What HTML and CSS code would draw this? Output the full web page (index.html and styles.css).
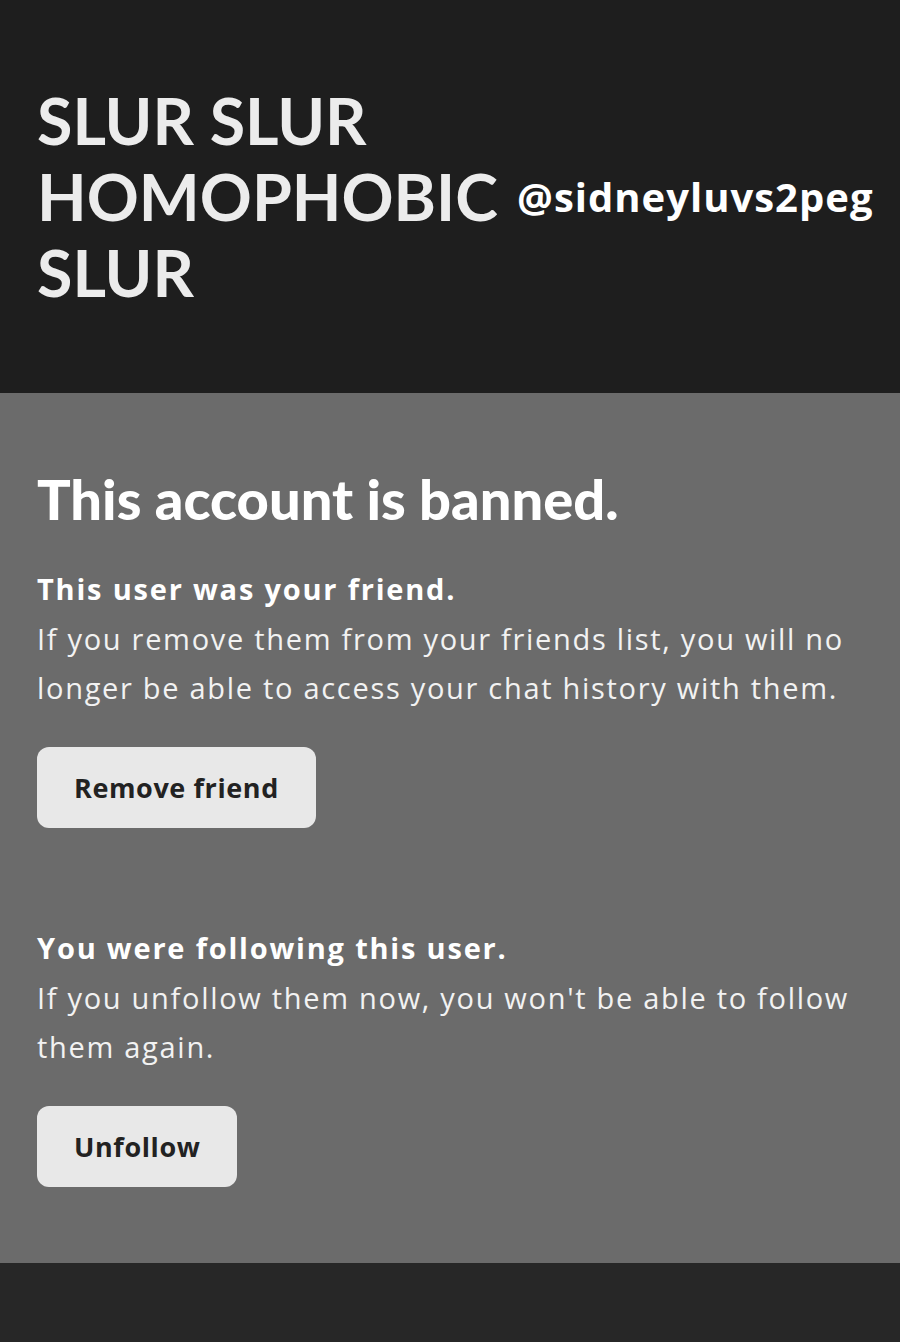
FILE: index.html
```html
<!DOCTYPE html>
<html lang="en">
<head>
  <meta charset="UTF-8" />
  <meta name="viewport" content="width=device-width, initial-scale=1.0" />
  <title>Banned account</title>
  <link rel="stylesheet" href="styles.css">
</head>
<body>

  <div class="profile-header">
    <h1 class="profile-name">SLUR SLUR HOMOPHOBIC SLUR</h1>
    <div class="profile-handle">@sidneyluvs2peg</div>
  </div>

  <div class="banned-panel">
    <h2 class="banned-title">This account is banned.</h2>

    <div class="banned-block">
      <h3 class="block-title">This user was your friend.</h3>
      <p class="block-text">If you remove them from your friends list, you will no longer be able to access your chat history with them.</p>
      <button class="block-button">Remove friend</button>
    </div>

    <div class="banned-block">
      <h3 class="block-title">You were following this user.</h3>
      <p class="block-text">If you unfollow them now, you won't be able to follow them again.</p>
      <button class="block-button">Unfollow</button>
    </div>
  </div>

  <div class="footer"></div>

</body>
</html>
```

FILE: styles.css
```css
body {
  margin: 0;
  font-family: 'Open Sans', 'Lato', sans-serif;
  background: #272727;
  color: #ffffff;
}

.profile-header {
  background: #1e1e1e;
  display: flex;
  align-items: center;
  gap: 18px;
  padding: 82px 26px 83px 37px;
}

.profile-name {
  margin: 0;
  width: 462px;
  font-family: 'Lato', sans-serif;
  font-size: 64.5px;
  line-height: 76px;
  font-weight: 700;
  color: #ececec;
}

.profile-handle {
  font-size: 40px;
  font-weight: 700;
  letter-spacing: 1px;
  color: #ffffff;
  white-space: nowrap;
}

.banned-panel {
  background: #6b6b6b;
  padding: 72px 37px 76px;
}

.banned-title {
  margin: 0 0 36px;
  font-family: 'Lato', sans-serif;
  font-size: 56px;
  line-height: 1.2;
  font-weight: 900;
}

.banned-block + .banned-block {
  margin-top: 99px;
}

.block-title {
  margin: 0 0 4px;
  font-size: 29px;
  line-height: 42px;
  font-weight: 700;
  letter-spacing: 1.8px;
}

.block-text {
  margin: 0;
  font-size: 29px;
  line-height: 49px;
  letter-spacing: 1.7px;
  color: #f2f2f2;
}

.block-button {
  margin-top: 35px;
  background: #e8e8e8;
  border: none;
  border-radius: 12px;
  padding: 0 37px;
  height: 81px;
  font-family: 'Open Sans', sans-serif;
  font-size: 27px;
  font-weight: 700;
  letter-spacing: 0.6px;
  color: #222222;
}

.footer {
  height: 80px;
  background: #272727;
}
```
